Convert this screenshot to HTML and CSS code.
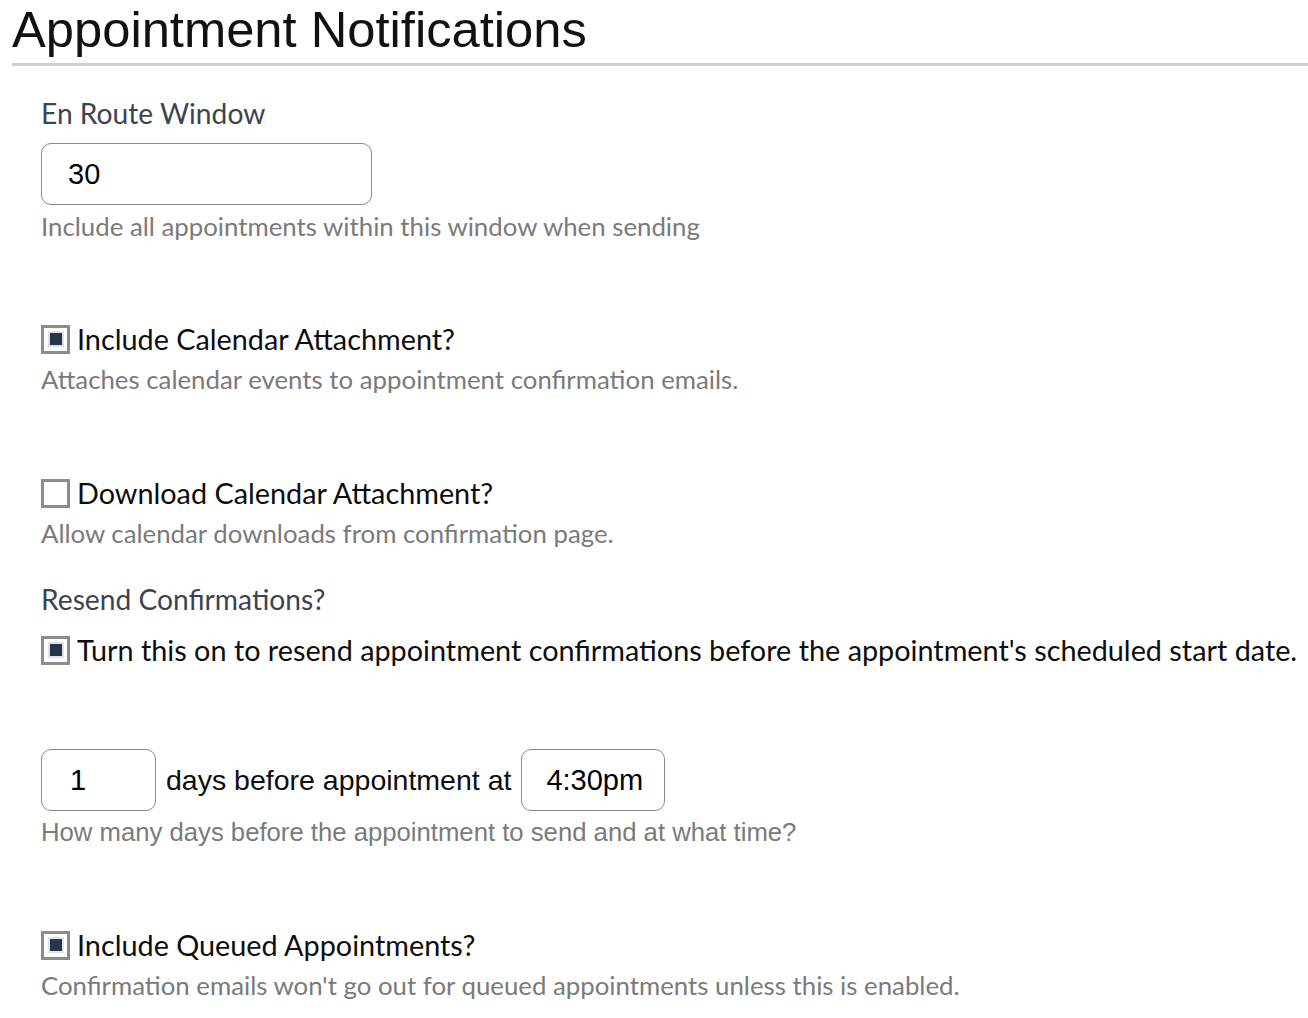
FILE: index.html
```html
<!DOCTYPE html>
<html lang="en">
<head>
<meta charset="utf-8">
<title>Appointment Notifications</title>
<link rel="stylesheet" href="styles.css">
</head>
<body>
<div class="page">
  <h1 class="title">Appointment Notifications</h1>
  <form class="form">
    <div class="field field-enroute">
      <div class="label">En Route Window</div>
      <div class="input input-wide">30</div>
      <div class="help">Include all appointments within this window when sending</div>
    </div>

    <div class="field field-cal">
      <label class="check-row">
        <span class="checkbox checked"><span class="dot"></span></span>
        <span class="check-text">Include Calendar Attachment?</span>
      </label>
      <div class="help">Attaches calendar events to appointment confirmation emails.</div>
    </div>

    <div class="field field-dl">
      <label class="check-row">
        <span class="checkbox"></span>
        <span class="check-text">Download Calendar Attachment?</span>
      </label>
      <div class="help">Allow calendar downloads from confirmation page.</div>
    </div>

    <div class="field field-resend">
      <div class="label">Resend Confirmations?</div>
      <label class="check-row check-row-resend">
        <span class="checkbox checked"><span class="dot"></span></span>
        <span class="check-text">Turn this on to resend appointment confirmations before the appointment's scheduled start date.</span>
      </label>
    </div>

    <div class="field field-days">
      <div class="inline-row">
        <div class="input input-days">1</div>
        <span class="inline-text">days before appointment at</span>
        <div class="input input-time">4:30pm</div>
      </div>
      <div class="help help-arial">How many days before the appointment to send and at what time?</div>
    </div>

    <div class="field field-queued">
      <label class="check-row">
        <span class="checkbox checked"><span class="dot"></span></span>
        <span class="check-text">Include Queued Appointments?</span>
      </label>
      <div class="help">Confirmation emails won't go out for queued appointments unless this is enabled.</div>
    </div>
  </form>
</div>
</body>
</html>
```

FILE: styles.css
```css
html, body {
  margin: 0;
  padding: 0;
  background: #ffffff;
}

.page {
  padding-left: 12px;
}

.title {
  margin: 0;
  font-family: "Liberation Sans", Arial, sans-serif;
  font-weight: 400;
  font-size: 50.7px;
  line-height: 60px;
  color: #111111;
  padding-bottom: 3px;
  border-bottom: 3px solid #cfcfcf;
}

.form {
  padding-left: 29px;
  font-family: "Lato", "Noto Sans", sans-serif;
}

.field {
  display: flex;
  flex-direction: column;
  align-items: flex-start;
}

.label {
  font-size: 28.2px;
  line-height: 32px;
  color: #3d4350;
}

.help {
  font-size: 25.8px;
  line-height: 30px;
  color: #7a7a7a;
}

.help-arial {
  font-family: "Liberation Sans", Arial, sans-serif;
  font-size: 25.7px;
}

.input {
  box-sizing: border-box;
  height: 62px;
  border: 1px solid #8a8a8a;
  border-radius: 10px;
  font-family: "Liberation Sans", Arial, sans-serif;
  font-size: 29px;
  color: #000;
  display: flex;
  align-items: center;
  padding-left: 26px;
}

.input-wide { width: 331px; }
.input-days { width: 115px; padding-left: 28px; }
.input-time { width: 144px; padding-left: 24px; }

.check-row {
  display: flex;
  align-items: center;
  gap: 7px;
}

.checkbox {
  box-sizing: border-box;
  width: 29px;
  height: 29px;
  border: 3px solid #8c8c8c;
  background: #fff;
  display: flex;
  align-items: center;
  justify-content: center;
  flex: none;
}

.dot {
  width: 12px;
  height: 12px;
  background: #27344a;
  box-shadow: 0 0 0 2px #dfe3ea;
}

.check-text {
  font-size: 28.8px;
  line-height: 36px;
  color: #0d0d0d;
}

.inline-row {
  display: flex;
  align-items: center;
  gap: 10px;
}

.inline-text {
  font-family: "Liberation Sans", Arial, sans-serif;
  font-size: 28.5px;
  color: #0d0d0d;
}

/* vertical rhythm */
.field-enroute { padding-top: 31px; }
.field-enroute .input { margin-top: 14px; }
.field-enroute .help { margin-top: 6px; }

.field-cal { margin-top: 80px; }
.field-cal .help { margin-top: 7px; }

.field-dl { margin-top: 81px; }
.field-dl .help { margin-top: 7px; }

.field-resend { margin-top: 35px; }
.check-row-resend { margin-top: 17px; }

.field-days { margin-top: 81px; }
.field-days .help { margin-top: 6px; }

.field-queued { margin-top: 80px; }
.field-queued .help { margin-top: 7px; }
```
